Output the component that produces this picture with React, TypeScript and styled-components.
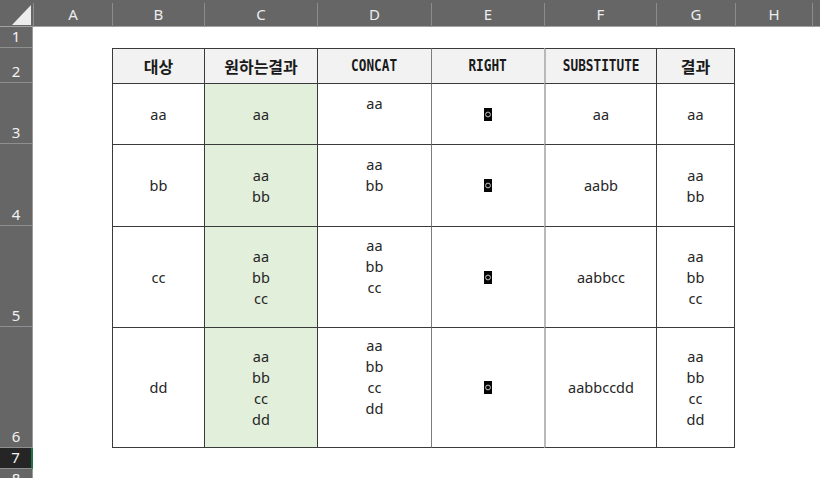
import React from 'react';
import styled, { createGlobalStyle } from 'styled-components';

const COLS = '33px 79px 92px 113px 114px 113px 112px 79px 77px 1fr';
const LETTERS = ['A', 'B', 'C', 'D', 'E', 'F', 'G', 'H'];

type Head = { text: string; code?: boolean };
const HEADERS: Head[] = [
  { text: '대상' },
  { text: '원하는결과' },
  { text: 'CONCAT', code: true },
  { text: 'RIGHT', code: true },
  { text: 'SUBSTITUTE', code: true },
  { text: '결과' },
];

const ITEMS = ['aa', 'bb', 'cc', 'dd'];
const DATA_HEIGHTS = [61, 82, 101, 121];

// border colour of the left edge of each table column (B..G)
const EDGES = ['#3a3a3a', '#3a3a3a', '#3a3a3a', '#7c7c7c', '#b9b9b9', '#3a3a3a'];

const App: React.FC = () => {
  return (
    <Sheet>
      <GlobalStyle />
      <ColumnBar>
        <Corner>
          <svg width="33" height="27" viewBox="0 0 33 27">
            <polygon points="12,25 31,25 31,5" fill="#ececec" />
          </svg>
        </Corner>
        {LETTERS.map((l) => (
          <ColLetter key={l}>{l}</ColLetter>
        ))}
        <ColLetter />
      </ColumnBar>

      <SheetRow $height={21}>
        <RowNum>1</RowNum>
      </SheetRow>

      <SheetRow $height={35}>
        <RowNum>2</RowNum>
        <Blank />
        {HEADERS.map((h, i) => (
          <TableCell key={h.text} $fill="head" $edge={EDGES[i]} $last={i === 5}>
            {h.code ? <CodeHead>{h.text}</CodeHead> : <KoHead>{h.text}</KoHead>}
          </TableCell>
        ))}
      </SheetRow>

      {ITEMS.map((item, r) => {
        const wanted = ITEMS.slice(0, r + 1);
        const columns: (string[] | null)[] = [
          [item],
          wanted,
          [...wanted, ''],
          null,
          [wanted.join('')],
          wanted,
        ];
        return (
          <SheetRow key={item} $height={DATA_HEIGHTS[r]}>
            <RowNum>{r + 3}</RowNum>
            <Blank />
            {columns.map((lines, c) => (
              <TableCell
                key={c}
                $fill={c === 1 ? 'green' : undefined}
                $edge={EDGES[c]}
                $last={c === 5}
                $bottom={r === 3}
              >
                {lines ? (
                  lines.map((t, k) => <Line key={k}>{t || '\u00a0'}</Line>)
                ) : (
                  <svg width="8" height="13" viewBox="0 0 8 13">
                    <rect width="8" height="13" fill="#050505" />
                    <circle cx="4" cy="6.5" r="2.4" fill="none" stroke="#c9c9c9" strokeWidth="1" />
                  </svg>
                )}
              </TableCell>
            ))}
          </SheetRow>
        );
      })}

      <SheetRow $height={21}>
        <RowNum $selected>7</RowNum>
      </SheetRow>
      <SheetRow $height={21}>
        <RowNum>8</RowNum>
      </SheetRow>
    </Sheet>
  );
};

export default App;

const GlobalStyle = createGlobalStyle`
  html, body {
    margin: 0;
    padding: 0;
    height: 478px;
    overflow: hidden;
    background: #ffffff;
  }

  * {
    box-sizing: border-box;
  }
`;

const Sheet = styled.div`
  width: 820px;
  display: flex;
  flex-direction: column;
  background: #ffffff;
`;

const ColumnBar = styled.div`
  height: 27px;
  display: grid;
  grid-template-columns: ${COLS};
  background: #666666;
  border-bottom: 1px solid #a3a3a3;
`;

const Corner = styled.div`
  display: flex;
`;

const ColLetter = styled.div`
  margin-top: 3px;
  border-left: 1px solid #8c8c8c;

  display: flex;
  justify-content: center;
  align-items: center;
  padding-bottom: 3px;

  font-family: 'Noto Sans', sans-serif;
  font-size: 15px;
  color: #ececec;
`;

const SheetRow = styled.div<{ $height: number }>`
  height: ${(p) => p.$height}px;
  display: grid;
  grid-template-columns: ${COLS};
`;

const RowNum = styled.div<{ $selected?: boolean }>`
  background: ${(p) => (p.$selected ? '#252525' : '#666666')};
  border-bottom: 1px solid #8f8f8f;
  border-right: ${(p) => (p.$selected ? '2px solid #217346' : '1px solid #9a9a9a')};

  display: flex;
  justify-content: center;
  align-items: flex-end;
  padding-bottom: 1px;

  font-family: 'Noto Sans', sans-serif;
  font-size: 15px;
  line-height: 19px;
  color: #f2f2f2;
`;

const Blank = styled.div``;

const TableCell = styled.div<{
  $fill?: 'head' | 'green';
  $edge: string;
  $last?: boolean;
  $bottom?: boolean;
}>`
  background: ${(p) =>
    p.$fill === 'head' ? '#f2f2f2' : p.$fill === 'green' ? '#e2efda' : '#ffffff'};
  border-top: 1px solid #3a3a3a;
  border-left: ${(p) => (p.$edge === '#b9b9b9' ? '2px' : '1px')} solid ${(p) => p.$edge};
  border-right: ${(p) => (p.$last ? '1px solid #3a3a3a' : 'none')};
  border-bottom: ${(p) => (p.$bottom ? '1px solid #3a3a3a' : 'none')};

  display: flex;
  flex-direction: column;
  justify-content: center;
  align-items: center;
`;

const KoHead = styled.span`
  font-family: 'Noto Sans CJK KR', sans-serif;
  font-weight: 700;
  font-size: 16px;
  line-height: 20px;
  color: #1a1a1a;
`;

const CodeHead = styled.span`
  display: inline-block;
  transform: scaleX(0.85);

  font-family: 'DejaVu Sans Mono', monospace;
  font-weight: 700;
  font-size: 15px;
  line-height: 20px;
  color: #1a1a1a;
`;

const Line = styled.div`
  height: 21px;

  font-family: 'Noto Sans', sans-serif;
  font-size: 14.5px;
  line-height: 21px;
  text-align: center;
  color: #262626;
`;
